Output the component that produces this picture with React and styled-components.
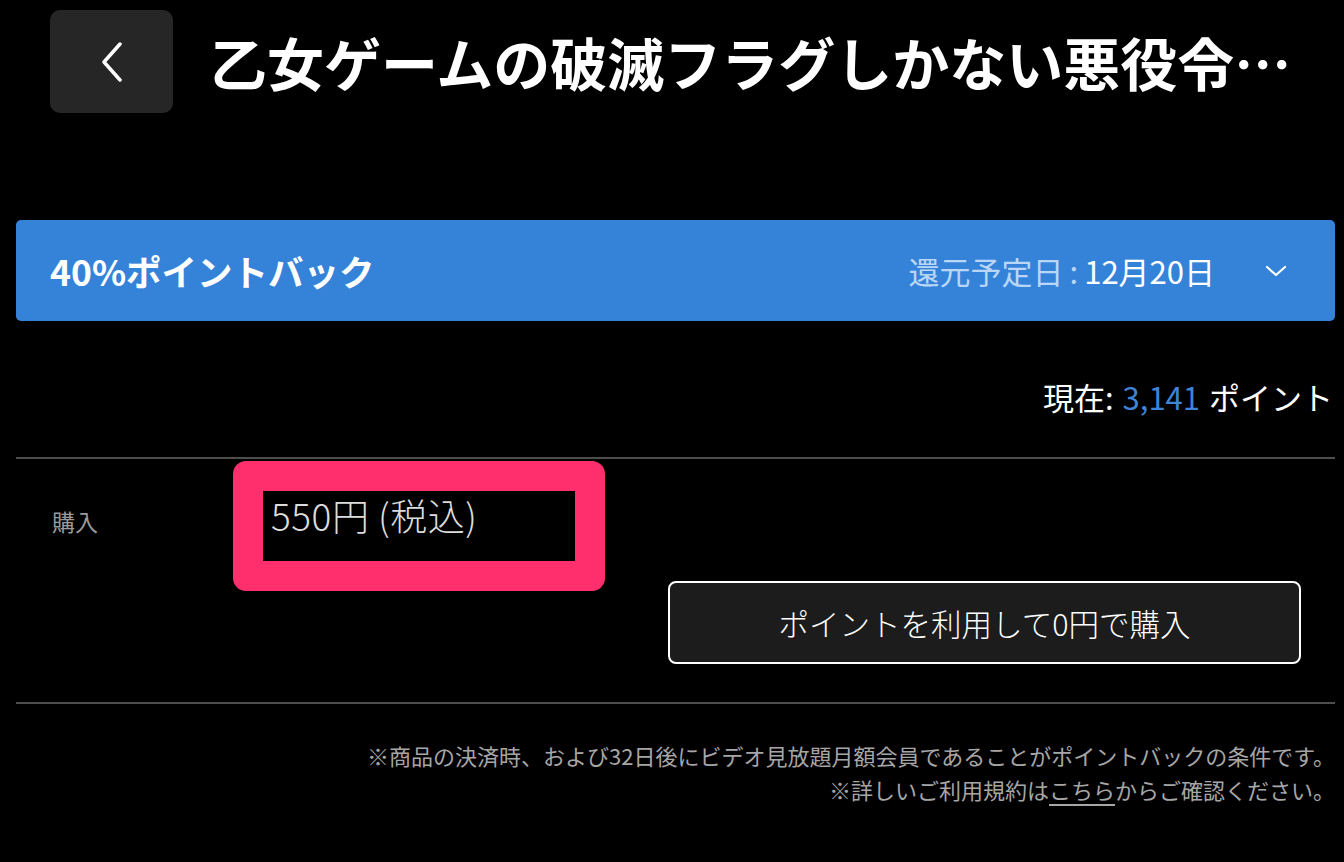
import React from 'react';
import styled, { createGlobalStyle } from 'styled-components';

const GlobalStyle = createGlobalStyle`
  html, body {
    margin: 0;
    padding: 0;
    background: #000;
  }
  body {
    font-family: "Noto Sans CJK JP", "Noto Sans", sans-serif;
    color: #fff;
  }
`;

const Page = styled.div`
  width: 1344px;
  height: 862px;
  overflow: hidden;
  background: #000;
`;

const Header = styled.header`
  display: flex;
  align-items: center;
  padding: 10px 0 0 50px;
`;

const BackButton = styled.button`
  flex: none;
  width: 123px;
  height: 103px;
  border: none;
  border-radius: 10px;
  background: #262626;
  display: flex;
  align-items: center;
  justify-content: center;
  padding: 0;
`;

const Title = styled.h1`
  margin: 0 0 0 37px;
  font-size: 57px;
  font-weight: 700;
  line-height: 1.1;
  white-space: nowrap;
`;

const Content = styled.div`
  padding: 0 9px 0 16px;
`;

const Banner = styled.div`
  margin-top: 107px;
  height: 101px;
  border-radius: 5px;
  background: #3583d9;
  display: flex;
  align-items: center;
  padding: 0 48px 0 34px;
`;

const BannerTitle = styled.div`
  font-size: 35.5px;
  font-weight: 700;
  flex: 1;
`;

const BannerDate = styled.div`
  font-size: 31px;
  color: #fff;
  span {
    color: #b9d6f6;
  }
  i {
    font-style: normal;
    margin: 0 6px;
  }
`;

const Chevron = styled.svg`
  margin-left: 50px;
  display: block;
`;

const Points = styled.div`
  margin-top: 56px;
  text-align: right;
  font-size: 31px;
  line-height: 40px;
  padding-right: 2px;
  b {
    font-weight: 400;
    color: #3d84d6;
    margin: 0 2px;
  }
`;

const Divider = styled.hr`
  margin: ${({ $top }) => $top || 0}px 0 0;
  border: none;
  height: 2px;
  background: #4d4d4d;
`;

const PurchaseRow = styled.div`
  display: grid;
  grid-template-columns: 211px 1fr;
  padding: 32px 34px 38px 36px;
`;

const Label = styled.div`
  font-size: 23px;
  line-height: 24px;
  padding-top: 18px;
  color: #9a9a9a;
`;

const Side = styled.div`
  display: flex;
  flex-direction: column;
`;

const PriceBox = styled.div`
  position: relative;
  width: 313px;
  height: 69px;
  box-sizing: border-box;
  padding: 4px 0 0 8px;
  font-size: 37px;
  line-height: 40px;
  color: #dcdcdc;
  font-weight: 300;
  letter-spacing: 0.5px;

  &::before {
    content: '';
    position: absolute;
    inset: -30px -29px -31px -30px;
    border: 30px solid #ff2f6e;
    border-radius: 13px;
    pointer-events: none;
  }
`;

const BuyButton = styled.button`
  align-self: flex-end;
  margin-top: 21px;
  width: 633px;
  height: 83px;
  box-sizing: border-box;
  background: #1c1c1c;
  border: 2px solid #fff;
  border-radius: 8px;
  color: #fff;
  font-family: inherit;
  font-size: 30.5px;
  font-weight: 300;
`;

const Notes = styled.div`
  margin-top: 34px;
  text-align: right;
  font-size: 22px;
  line-height: 34px;
  color: #a6a6a6;

  a {
    color: inherit;
    text-decoration: underline;
    text-underline-offset: 5px;
  }
`;

const App = () => {
  return (
    <Page>
      <GlobalStyle />
      <Header>
        <BackButton aria-label="戻る">
          <svg width="24" height="40" viewBox="0 0 24 40">
            <path d="M20 2 L4 20 L20 38" fill="none" stroke="#fff" strokeWidth="3.5" strokeLinecap="round" strokeLinejoin="round" />
          </svg>
        </BackButton>
        <Title>乙女ゲームの破滅フラグしかない悪役令…</Title>
      </Header>
      <Content>
        <Banner>
          <BannerTitle>40%ポイントバック</BannerTitle>
          <BannerDate>
            <span>還元予定日<i>:</i></span>12月20日
          </BannerDate>
          <Chevron width="22" height="12" viewBox="0 0 22 12">
            <path d="M2 2 L11 10 L20 2" fill="none" stroke="#fff" strokeWidth="2.2" strokeLinecap="round" strokeLinejoin="round" />
          </Chevron>
        </Banner>
        <Points>
          現在: <b>3,141</b> ポイント
        </Points>
        <Divider $top={40} />
        <PurchaseRow>
          <Label>購入</Label>
          <Side>
            <PriceBox>550円 (税込)</PriceBox>
            <BuyButton>ポイントを利用して0円で購入</BuyButton>
          </Side>
        </PurchaseRow>
        <Divider />
        <Notes>
          ※商品の決済時、および32日後にビデオ見放題月額会員であることがポイントバックの条件です。
          <br />
          ※詳しいご利用規約は<a href="#terms">こちら</a>からご確認ください。
        </Notes>
      </Content>
    </Page>
  );
};

export default App;
